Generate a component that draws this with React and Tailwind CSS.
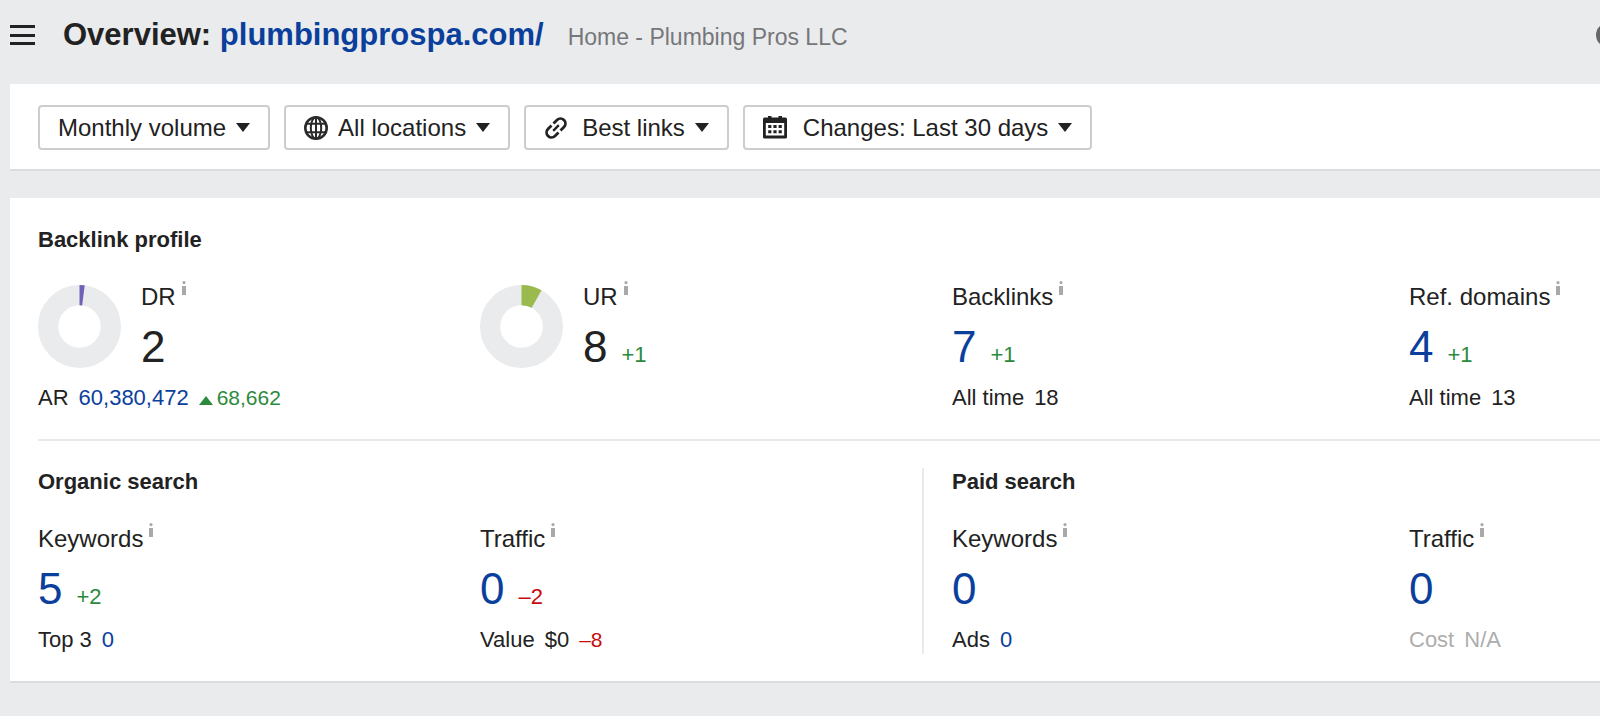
import React from "react";

const BLUE = "text-[#0b3f9c]";
const GREEN = "text-[#2c8a3d]";
const RED = "text-[#c60c0c]";

const MenuIcon = () => (
  <svg width="25" height="22" viewBox="0 0 25 22" fill="#222222">
    <rect y="1" width="25" height="3" />
    <rect y="10" width="25" height="3" />
    <rect y="18" width="25" height="3" />
  </svg>
);

const GlobeIcon = () => (
  <svg
    width="24"
    height="24"
    viewBox="0 0 24 24"
    fill="none"
    stroke="#2b2b2b"
    strokeWidth="2"
    className="shrink-0"
  >
    <circle cx="12" cy="12" r="10.7" strokeWidth="2.6" />
    <ellipse cx="12" cy="12" rx="5.2" ry="10.7" />
    <path d="M12 1v22M2.6 7.8h18.8M2.6 16.2h18.8" />
  </svg>
);

const LinkIcon = () => (
  <svg
    width="24"
    height="24"
    viewBox="0 0 24 24"
    fill="none"
    stroke="#222222"
    strokeWidth="2.8"
    className="shrink-0"
  >
    <path d="M9.5 7.5L13 4A4.95 4.95 0 0 1 20 11L16.5 14.5" />
    <path d="M14.5 16.5L11 20A4.95 4.95 0 0 1 4 13L7.5 9.5" />
    <path d="M9.2 14.8l5.6-5.6" strokeWidth="2.4" />
  </svg>
);

const CalendarIcon = () => (
  <svg width="24" height="24" viewBox="0 0 24 24" className="shrink-0">
    <path
      fill="#222222"
      fillRule="evenodd"
      d="M1.5 1.5H5V0h3.5v1.5h7V0H19v1.5h3.5A1.5 1.5 0 0 1 24 3v18a1.5 1.5 0 0 1-1.5 1.5h-21A1.5 1.5 0 0 1 0 21V3a1.5 1.5 0 0 1 1.5-1.5zM2.8 7v12.6h18.4V7z"
    />
    <path
      fill="#222222"
      d="M5.2 9h3.2v3H5.2zM10.4 9h3.2v3h-3.2zM15.6 9h3.2v3h-3.2zM5.2 14.2h3.2v3H5.2zM10.4 14.2h3.2v3h-3.2zM15.6 14.2h3.2v3h-3.2z"
    />
  </svg>
);

const InfoIcon = () => (
  <svg width="4" height="14" viewBox="0 0 4 14" fill="#a9a9a9">
    <circle cx="2" cy="1.6" r="1.6" />
    <rect y="5" width="4" height="9" />
  </svg>
);

// ring with the filled part starting at 12 o'clock
const Donut = ({ value, color }) => {
  const angle = (value / 100) * 2 * Math.PI;
  const point = (r) =>
    `${41 + r * Math.sin(angle)} ${41 - r * Math.cos(angle)}`;
  return (
    <svg width="83" height="83" viewBox="0 0 82 82" className="shrink-0">
      <circle
        cx="41"
        cy="41"
        r="31"
        fill="none"
        stroke="#eaebed"
        strokeWidth="20"
      />
      <path
        d={`M41 0A41 41 0 0 1 ${point(41)}L${point(21)}A21 21 0 0 0 41 20z`}
        fill={color}
      />
    </svg>
  );
};

const Filter = ({ name, icon, options, gap = "gap-2.5" }) => (
  <label
    className={`flex h-[45px] items-center rounded border-2 border-[#cdcdcd] bg-white px-[18px] ${gap}`}
  >
    {icon}
    <span className="flex items-center">
      <select
        aria-label={name}
        className="field-sizing-content appearance-none bg-transparent pr-6 text-2xl leading-8 outline-none"
      >
        {options.map((option) => (
          <option key={option}>{option}</option>
        ))}
      </select>
      <svg
        width="14"
        height="9"
        viewBox="0 0 14 9"
        fill="#222222"
        className="pointer-events-none -ml-3.5"
      >
        <path d="M0 0h14L7 9z" />
      </svg>
    </span>
  </label>
);

const Stat = ({ label, value, change, changeColor, link, donut, children }) => (
  <div>
    <div className="flex items-center gap-5">
      {donut}
      <div>
        <div className="flex items-start gap-1.5 text-2xl leading-8">
          {label}
          <InfoIcon />
        </div>
        <div className="mt-2.5 flex h-12 items-baseline gap-3.5 leading-12">
          {link ? (
            <a href="#" className={`text-[44px] ${BLUE}`}>
              {value}
            </a>
          ) : (
            <span className="text-[44px]">{value}</span>
          )}
          {change && (
            <span className={`text-[22px] ${changeColor}`}>{change}</span>
          )}
        </div>
      </div>
    </div>
    <div className="mt-[13px] flex h-7 items-baseline gap-2.5 text-[22px] leading-7 whitespace-nowrap">
      {children}
    </div>
  </div>
);

const Heading = ({ children }) => (
  <h2 className="col-span-full mb-[27px] text-[22px] leading-7 font-bold">
    {children}
  </h2>
);

const App = () => {
  return (
    <div className="min-h-screen overflow-hidden bg-[#eaebed] pl-2.5 font-['Liberation_Sans',Arial,sans-serif] text-[#222222]">
      <header className="flex items-center pt-[15px] pb-[29px]">
        <button type="button" aria-label="Menu">
          <MenuIcon />
        </button>
        <div className="ml-7 flex items-baseline gap-6 whitespace-nowrap">
          <h1 className="text-[31px] leading-10 font-bold">
            Overview:{" "}
            <a href="#" className={BLUE}>
              plumbingprospa.com/
            </a>
          </h1>
          <span className="text-[23px] text-[#76777a]">
            Home - Plumbing Pros LLC
          </span>
        </div>
        <button
          type="button"
          aria-label="Help"
          className="-mr-5 ml-auto size-6 shrink-0 rounded-full bg-[#666666]"
        />
      </header>

      <div className="flex gap-3.5 border-b-2 border-[#dcdddf] bg-white px-7 pt-[21px] pb-[19px]">
        <Filter name="Volume" options={["Monthly volume", "Average volume"]} />
        <Filter
          name="Location"
          icon={<GlobeIcon />}
          options={["All locations"]}
        />
        <Filter
          name="Links"
          icon={<LinkIcon />}
          options={["Best links", "All links"]}
          gap="gap-3.5"
        />
        <Filter
          name="Period"
          icon={<CalendarIcon />}
          options={["Changes: Last 30 days", "Changes: Last 7 days"]}
          gap="gap-4"
        />
      </div>

      <main className="mt-[27px] border-b-2 border-[#dcdddf] bg-white pt-7 pb-[27px] pl-7">
        <section className="grid grid-cols-[442fr_442fr_487fr_191fr] border-b-2 border-[#e9eaeb] pb-[27px]">
          <Heading>Backlink profile</Heading>
          <Stat
            label="DR"
            value="2"
            donut={<Donut value={2} color="#7160b8" />}
          >
            <span>AR</span>
            <a href="#" className={BLUE}>
              60,380,472
            </a>
            <span className={`flex items-baseline gap-1 text-[21px] ${GREEN}`}>
              <svg width="14" height="9" viewBox="0 0 14 9" fill="currentColor">
                <path d="M7 0l7 9H0z" />
              </svg>
              68,662
            </span>
          </Stat>
          <Stat
            label="UR"
            value="8"
            change="+1"
            changeColor={GREEN}
            donut={<Donut value={8} color="#9aba4e" />}
          />
          <div className="pl-[30px]">
            <Stat label="Backlinks" value="7" change="+1" changeColor={GREEN} link>
              <span>All time</span>
              <span>18</span>
            </Stat>
          </div>
          <Stat label="Ref. domains" value="4" change="+1" changeColor={GREEN} link>
            <span>All time</span>
            <span>13</span>
          </Stat>
        </section>

        <div className="grid grid-cols-[442fr_442fr_487fr_191fr] pt-[27px]">
          <section className="col-span-2 grid grid-cols-subgrid">
            <Heading>Organic search</Heading>
            <Stat label="Keywords" value="5" change="+2" changeColor={GREEN} link>
              <span>Top 3</span>
              <a href="#" className={BLUE}>
                0
              </a>
            </Stat>
            <Stat label="Traffic" value="0" change="–2" changeColor={RED} link>
              <span>Value</span>
              <span>$0</span>
              <span className={`text-[21px] ${RED}`}>–8</span>
            </Stat>
          </section>
          <section className="col-span-2 grid grid-cols-subgrid border-l-2 border-[#e9eaec] pl-7">
            <Heading>Paid search</Heading>
            <Stat label="Keywords" value="0" link>
              <span>Ads</span>
              <a href="#" className={BLUE}>
                0
              </a>
            </Stat>
            <Stat label="Traffic" value="0" link>
              <span className="text-[#adadad]">Cost</span>
              <span className="text-[#adadad]">N/A</span>
            </Stat>
          </section>
        </div>
      </main>
    </div>
  );
};

export default App;
